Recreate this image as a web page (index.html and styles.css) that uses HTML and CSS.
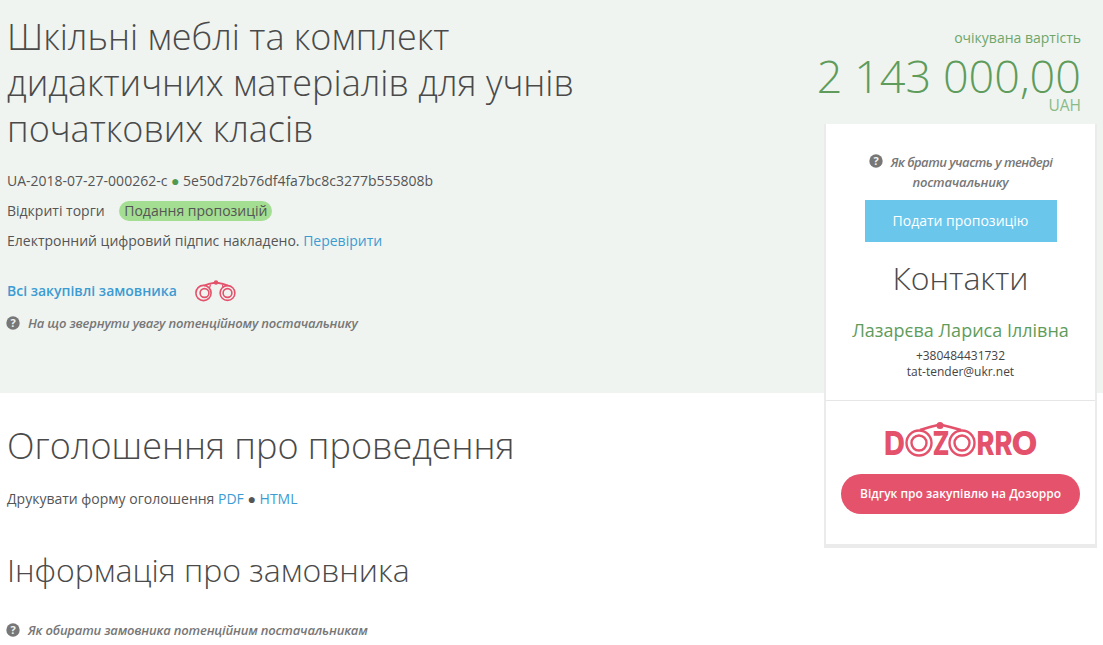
FILE: index.html
```html
<!DOCTYPE html>
<html lang="uk">
<head>
<meta charset="utf-8">
<title>Шкільні меблі</title>
<link rel="stylesheet" href="styles.css">
</head>
<body>
<div class="page">
  <header class="band">
    <div class="band-main">
      <h1 class="title">Шкільні меблі та комплект дидактичних матеріалів для учнів початкових класів</h1>
      <p class="line line-id">UA-2018-07-27-000262-c <span class="dot">●</span> 5e50d72b76df4fa7bc8c3277b555808b</p>
      <p class="line line-type">Відкриті торги <span class="badge">Подання пропозицій</span></p>
      <p class="line line-sign">Електронний цифровий підпис накладено. <a class="link" href="#">Перевірити</a></p>
      <p class="line line-all">
        <a class="link link-bold" href="#">Всі закупівлі замовника</a>
        <svg class="binoc" width="44" height="22" viewBox="0 0 44 22" fill="none" stroke="#e4516b">
          <circle cx="9.5" cy="13" r="7.6" stroke-width="1.6"/><circle cx="10.5" cy="13" r="4.4" stroke-width="1.6"/>
          <circle cx="33.500" cy="13" r="7.4" stroke-width="1.6"/><circle cx="33.500" cy="13" r="4.4" stroke-width="1.6"/>
          <path d="M10 5.5 L15 3.800 L22 2.500 L29 3.800 L34 5.500" stroke-width="1.800"/>
          <path d="M15.500 8 L16.500 4.500 M28.500 4.500 L29 8" stroke-width="1.200"/>
          <circle cx="22" cy="2.500" r="2.200" fill="#e4516b" stroke="none"/>
        </svg>
      </p>
      <p class="hint"><svg class="q" width="14" height="14" viewBox="0 0 14 14"><circle cx="7" cy="7" r="6.7" fill="#777"/><text x="7" y="10.8" text-anchor="middle" class="q-mark">?</text></svg><em>На що звернути увагу потенційному постачальнику</em></p>
    </div>
    <div class="price">
      <div class="price-label">очікувана вартість</div>
      <div class="price-value">2 143 000,00</div>
      <div class="price-cur">UAH</div>
    </div>
  </header>

  <main class="content">
    <h2 class="h-notice">Оголошення про проведення</h2>
    <p class="line">Друкувати форму оголошення <a class="link" href="#">PDF</a> ● <a class="link" href="#">HTML</a></p>
    <h2 class="h-buyer">Інформація про замовника</h2>
    <p class="hint hint-buyer"><svg class="q" width="14" height="14" viewBox="0 0 14 14"><circle cx="7" cy="7" r="6.7" fill="#777"/><text x="7" y="10.8" text-anchor="middle" class="q-mark">?</text></svg><em>Як обирати замовника потенційним постачальникам</em></p>
  </main>

  <aside class="card">
    <div class="card-top">
      <p class="card-hint"><svg class="q q-card" width="14" height="14" viewBox="0 0 14 14"><circle cx="7" cy="7" r="6.7" fill="#777"/><text x="7" y="10.8" text-anchor="middle" class="q-mark">?</text></svg><em><span class="tight">Як брати участь у тендері</span> постачальнику</em></p>
      <a class="submit" href="#">Подати пропозицію</a>
      <h2 class="contacts">Контакти</h2>
      <div class="person">Лазарєва Лариса Іллівна</div>
      <div class="contact-line">+380484431732</div>
      <div class="contact-line">tat-tender@ukr.net</div>
    </div>
    <div class="card-bottom">
      <svg class="logo" width="156" height="44" viewBox="0 0 156 44" role="img" aria-label="DOZORRO">
        <text x="1" y="37" class="logo-t" textLength="21" lengthAdjust="spacingAndGlyphs">D</text>
        <text x="49.500" y="37" class="logo-t" textLength="17" lengthAdjust="spacingAndGlyphs">Z</text>
        <text x="93.500" y="37" class="logo-t" textLength="36" lengthAdjust="spacingAndGlyphs">RR</text>
        <text x="128.500" y="37" class="logo-t" textLength="26" lengthAdjust="spacingAndGlyphs">O</text>
        <g fill="none" stroke="#e4516b">
          <circle cx="36" cy="25" r="12.500" stroke-width="2.400"/><circle cx="36" cy="25" r="7.500" stroke-width="2.400"/>
          <circle cx="79" cy="25" r="12.500" stroke-width="2.400"/><circle cx="79" cy="25" r="7.500" stroke-width="2.400"/>
          <path d="M37 12 L47 9 L57 6.500 L67 9 L78 12" stroke-width="2.600"/>
        </g>
        <circle cx="57" cy="7.500" r="3.500" fill="#e4516b"/>
      </svg>
      <a class="review" href="#">Відгук про закупівлю на Дозорро</a>
    </div>
  </aside>
</div>
</body>
</html>
```
FILE: styles.css
```css
* { box-sizing: border-box; }
html, body { margin: 0; padding: 0; }
body {
  font-family: "Open Sans", "Noto Sans", sans-serif;
  font-size: 14px;
  color: #555;
  background: #fff;
  overflow: hidden;
}
.page { position: relative; width: 1103px; height: 645px; overflow: hidden; }
.band {
  height: 393px;
  background: #eff4f1;
  padding: 14px 22px 0 7px;
  display: flex;
  justify-content: space-between;
  align-items: flex-start;
}
.band-main { width: 620px; }
.title {
  margin: 0 0 19px;
  font-weight: 300;
  font-size: 36px;
  line-height: 46px;
  color: #4a4a4a;
}
.line { margin: 0; font-size: 14px; line-height: 20px; color: #555; }
.line-id { margin-bottom: 10px; }
.line-type { margin-bottom: 10px; }
.line-all { margin-top: 29px; display: flex; align-items: center; height: 22px; }
.dot { color: #4f9a52; }
.badge {
  display: inline-block;
  margin-left: 11px;
  padding: 0 5px;
  background: #a3de93;
  border-radius: 10px;
  line-height: 20px;
}
.link { color: #3c9bd1; text-decoration: none; }
.link-bold { font-weight: 600; }
.binoc { margin-left: 17px; }
.hint { margin: 11px 0 0 -1px; display: flex; align-items: center; gap: 8px; line-height: 20px; color: #666; font-size: 13px; }
.hint em { font-weight: 600; font-style: italic; letter-spacing: -0.18px; color: #777; }
.q { flex: none; }
.q-mark { font: 700 11px "Open Sans", sans-serif; fill: #eff4f1; }
.price { text-align: right; color: #5f9c5b; font-weight: 300; }
.price-label { margin-top: 14px; font-size: 14px; line-height: 20px; font-weight: 400; color: #6ea66a; }
.price-value { font-size: 45px; line-height: 58px; margin-top: -1px; }
.price-cur { font-size: 15.500px; line-height: 18px; margin-top: -9px; font-weight: 400; color: #8abb87; }
.content { padding: 0 0 0 7px; }
.h-notice {
  margin: 30px 0 20px;
  font-weight: 300;
  font-size: 36px;
  line-height: 46px;
  color: #4a4a4a;
}
.h-buyer {
  margin: 40px 0 0;
  font-weight: 300;
  font-size: 32px;
  line-height: 42px;
  color: #4a4a4a;
}
.hint-buyer { margin-top: 29px; }
.card {
  position: absolute;
  left: 824px;
  top: 124px;
  width: 273px;
  height: 424px;
  background: #fff;
  border: 2px solid #ebebeb;
  border-top: 0;
  border-bottom-width: 4px;
  text-align: center;
}
.card-top { height: 277px; padding: 28px 0 0; border-bottom: 1px solid #e6e6e6; }
.card-hint { margin: 0 auto; width: 210px; font-size: 13px; line-height: 20px; color: #777; }
.card-hint em { font-weight: 600; letter-spacing: -0.2px; }
.card-hint .tight { letter-spacing: -0.5px; }
.q-card { margin-right: 8px; vertical-align: -1px; }
.submit {
  display: block;
  width: 192px;
  height: 42px;
  margin: 8px auto 0;
  background: #6bc6ec;
  color: #fff;
  font-size: 14px;
  line-height: 42px;
  text-decoration: none;
}
.contacts { margin: 13px 0 0; font-weight: 300; font-size: 32px; line-height: 46px; color: #4a4a4a; }
.person { margin-top: 17px; font-size: 18px; line-height: 24px; color: #5f9c5b; }
.contact-line { font-size: 12px; line-height: 16px; color: #444; }
.person + .contact-line { margin-top: 6px; }
.card-bottom { padding: 17px 0 0; display: flex; flex-direction: column; align-items: center; }
.logo { display: block; }
.logo-t { font: 800 33px "Inter", "Liberation Sans", sans-serif; fill: #e4516b; }
.review {
  display: block;
  width: 239px;
  height: 40px;
  margin-top: 12px;
  background: #e5526b;
  border-radius: 20px;
  color: #fff;
  font-size: 12px;
  font-weight: 600;
  line-height: 40px;
  text-decoration: none;
}
```
